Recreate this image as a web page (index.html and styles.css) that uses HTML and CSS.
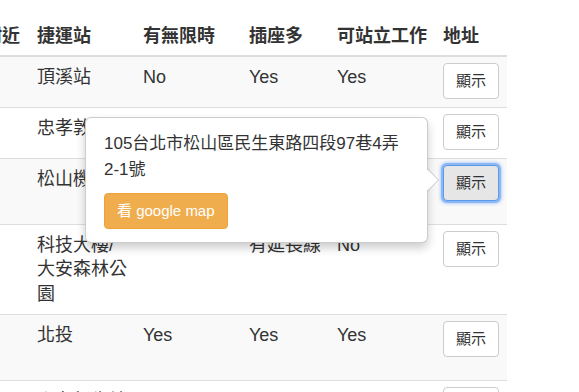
FILE: index.html
```html
<!DOCTYPE html>
<html lang="zh-Hant">
<head>
    <meta charset="UTF-8">
    <meta name="viewport" content="width=device-width, initial-scale=1.0">
    <title>咖啡廳列表</title>
    <link rel="stylesheet" href="styles.css">
</head>
<body>
    <div class="page">
        <table class="cafe-table">
            <colgroup>
                <col class="col-name">
                <col class="col-near">
                <col class="col-mrt">
                <col class="col-limit">
                <col class="col-socket">
                <col class="col-stand">
                <col class="col-addr">
            </colgroup>
            <thead>
                <tr>
                    <th>店名</th>
                    <th>附近</th>
                    <th>捷運站</th>
                    <th>有無限時</th>
                    <th>插座多</th>
                    <th>可站立工作</th>
                    <th>地址</th>
                </tr>
            </thead>
            <tbody>
                <tr>
                    <td>小確幸咖啡</td>
                    <td></td>
                    <td>頂溪站</td>
                    <td>No</td>
                    <td>Yes</td>
                    <td>Yes</td>
                    <td><button class="btn">顯示</button></td>
                </tr>
                <tr>
                    <td>貳拾陸巷咖啡</td>
                    <td></td>
                    <td>忠孝敦化</td>
                    <td>Yes</td>
                    <td>Yes</td>
                    <td>No</td>
                    <td><button class="btn">顯示</button></td>
                </tr>
                <tr>
                    <td>民生社區咖啡工作室</td>
                    <td></td>
                    <td>松山機場</td>
                    <td>假日限時2小時</td>
                    <td>Yes</td>
                    <td>Yes</td>
                    <td><button class="btn is-focused">顯示</button></td>
                </tr>
                <tr>
                    <td>木子鳥咖啡</td>
                    <td></td>
                    <td>科技大樓/大安森林公園</td>
                    <td></td>
                    <td>有延長線</td>
                    <td>No</td>
                    <td><button class="btn">顯示</button></td>
                </tr>
                <tr>
                    <td>北投溫泉旁的咖啡館</td>
                    <td></td>
                    <td>北投</td>
                    <td>Yes</td>
                    <td>Yes</td>
                    <td>Yes</td>
                    <td><button class="btn">顯示</button></td>
                </tr>
                <tr>
                    <td>光點咖啡</td>
                    <td></td>
                    <td>忠孝新生站</td>
                    <td>No</td>
                    <td>Yes</td>
                    <td>Yes</td>
                    <td><button class="btn">顯示</button></td>
                </tr>
            </tbody>
        </table>

        <!-- 地址彈出框 -->
        <div class="popover">
            <div class="popover-arrow"></div>
            <p class="popover-text">105台北市松山區民生東路四段97巷4弄2-1號</p>
            <button class="btn btn-map">看 google map</button>
        </div>
    </div>
</body>
</html>
```

FILE: styles.css
```css
body {
    margin: 0;
    font-family: "Liberation Sans", "Noto Sans CJK TC", sans-serif;
    color: #333;
    background: #fff;
    overflow: hidden;
}
.page {
    position: relative;
    padding-top: 16px;
    overflow: hidden;
    height: 392px;
}
.cafe-table {
    table-layout: fixed;
    border-collapse: collapse;
    width: 681px;
    margin-left: -174px;
    font-size: 18px;
    line-height: 24.5px;
}
.col-name { width: 150px; }
.col-near { width: 53px; }
.col-mrt { width: 106px; }
.col-limit { width: 106px; }
.col-socket { width: 88px; }
.col-stand { width: 106px; }
.col-addr { width: 72px; }
th, td {
    text-align: left;
    vertical-align: top;
    padding: 8px;
}
th {
    padding-bottom: 6px;
    font-weight: bold;
    white-space: nowrap;
    vertical-align: bottom;
    border-bottom: 2px solid #ddd;
}
td {
    border-top: 1px solid #ddd;
}
tbody tr:nth-child(odd) {
    background-color: #f9f9f9;
}
.btn {
    display: inline-block;
    font-family: "Liberation Sans", "Noto Sans CJK TC", sans-serif;
    font-size: 15px;
    line-height: 22px;
    padding: 6px 12px;
    color: #333;
    background-color: #fff;
    border: 1px solid #ccc;
    border-radius: 4px;
    cursor: pointer;
}
td .btn {
    vertical-align: top;
    margin-top: -2px;
}
.btn.is-focused {
    background-color: #e6e6e6;
    border-color: #5b9ae8;
    box-shadow: 0 0 0 2px #8ab8f5, 0 0 3px 3px rgba(120, 170, 245, 0.5);
}
.popover {
    position: absolute;
    left: 85px;
    top: 117px;
    width: 343px;
    box-sizing: border-box;
    padding: 13px 18px 13px;
    background: #fff;
    border: 1px solid rgba(0, 0, 0, 0.2);
    border-radius: 6px;
    box-shadow: 0 5px 10px rgba(0, 0, 0, 0.2);
}
.popover-text {
    margin: 0 0 10px;
    font-size: 17px;
    line-height: 26px;
}
.popover-arrow {
    position: absolute;
    right: -12px;
    top: 50%;
    margin-top: -12px;
    border-style: solid;
    border-width: 12px 0 12px 12px;
    border-color: transparent transparent transparent rgba(0, 0, 0, 0.2);
}
.popover-arrow::after {
    content: "";
    position: absolute;
    top: -11px;
    right: 1px;
    border-style: solid;
    border-width: 11px 0 11px 11px;
    border-color: transparent transparent transparent #fff;
}
.btn-map {
    font-size: 15px;
    line-height: 22px;
    padding: 6px 12px;
    color: #fff;
    background-color: #f0ad4e;
    border-color: #eea236;
}
```
